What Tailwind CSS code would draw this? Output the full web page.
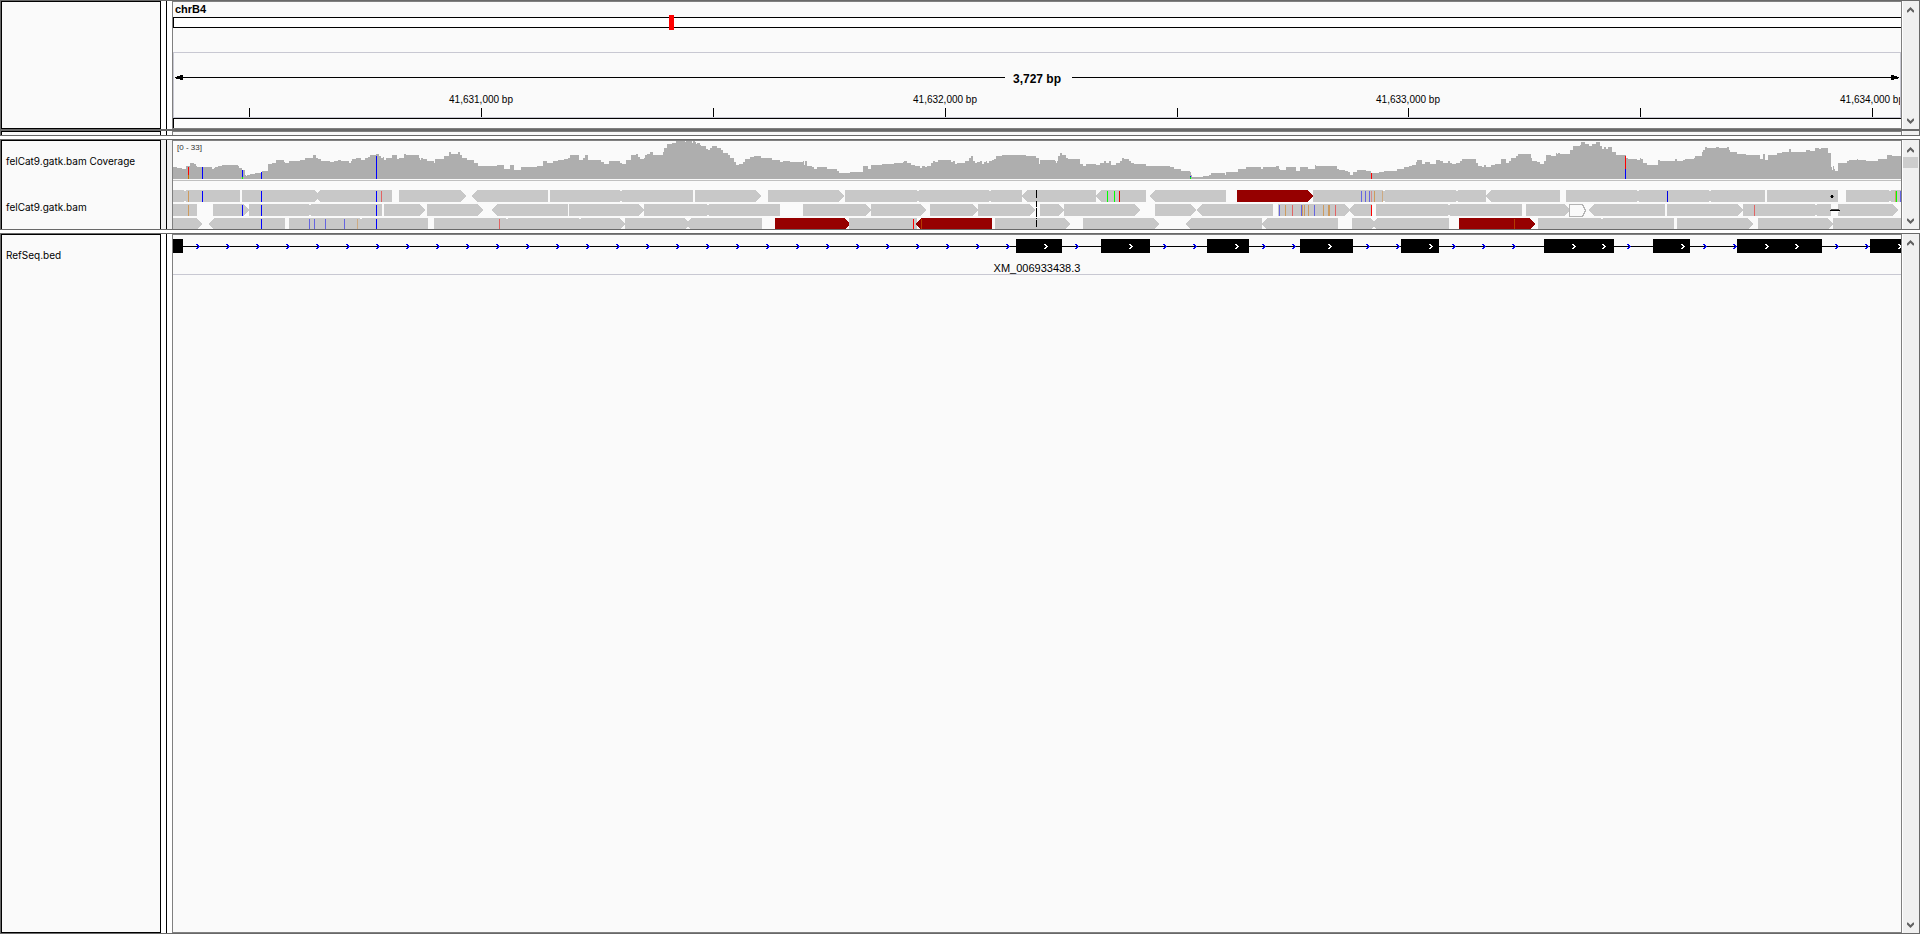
<!DOCTYPE html>
<html lang="en">
<head>
<meta charset="utf-8">
<title>Genome browser - chrB4</title>
<script src="https://cdn.jsdelivr.net/npm/@tailwindcss/browser@4"></script>
</head>
<body class="bg-white text-black font-['Liberation_Sans',Arial,sans-serif]">
<svg class="hidden" aria-hidden="true">
  <symbol id="up" viewBox="0 0 7 6"><path d="M0 5L3.5 1.500L7 5" fill="none" stroke="#606060" stroke-width="2"/></symbol>
  <symbol id="down" viewBox="0 0 7 6"><path d="M0 1L3.5 4.500L7 1" fill="none" stroke="#606060" stroke-width="2"/></symbol>
</svg>
<main class="flex flex-col min-h-screen">

  <!-- Header: ideogram and ruler -->
  <section class="flex border-t border-x border-[#696969]">
    <div class="w-40 shrink-0 border border-black bg-[#fafafa]"></div>
    <div class="w-[11px] shrink-0 flex justify-center bg-white"><div class="w-px bg-black"></div></div>
    <div class="flex-1 min-w-0 border border-[#808080] bg-[#fafafa]">
      <h1 class="h-[15px] pl-0.5 text-[11px] leading-[14px] font-bold">chrB4</h1>
      <div class="relative h-[11px] border-y border-l border-black bg-white">
        <div class="absolute left-[28.65%] -top-[3px] w-[5px] h-[15px] bg-[#ff0000]"></div>
      </div>
      <div class="mt-6 border border-[#c8c8d2]">
        <svg id="ruler" class="block w-full h-16" role="img" aria-label="Ruler, 3,727 bp" shape-rendering="crispEdges"></svg>
      </div>
      <div class="h-[10px] border-t border-l border-black bg-[#fcfcfc]"></div>
    </div>
    <div class="w-[17px] shrink-0 border-l border-white bg-[#f0f0f0] flex flex-col justify-between">
      <button type="button" aria-label="Scroll header up" class="h-[18px] pr-0.5 flex items-center justify-center"><svg class="w-[7px] h-1.5"><use href="#up"/></svg></button>
      <button type="button" aria-label="Scroll header down" class="h-4 pr-0.5 flex items-center justify-center"><svg class="w-[7px] h-1.5"><use href="#down"/></svg></button>
    </div>
  </section>

  <!-- Collapsed data panel -->
  <section class="flex h-[7px] mb-[3px] border-t-2 border-x border-b border-[#696969]">
    <div class="w-40 shrink-0 border-t border-x border-black bg-[#fafafa]"></div>
    <div class="w-[11px] shrink-0 flex justify-center bg-white"><div class="w-px bg-black"></div></div>
    <div class="flex-1 border-t border-x border-[#808080] bg-[#fafafa]"></div>
    <div class="w-[17px] shrink-0 border-l border-white bg-[#f0f0f0]"></div>
  </section>

  <!-- Coverage and alignments -->
  <section class="flex mb-[3px] border border-[#696969]">
    <div class="w-40 shrink-0 border-t border-x border-black bg-[#fafafa] pt-3 pl-1 flex flex-col gap-[30px] text-[10px] leading-[16px] font-['Inter','Liberation_Sans',sans-serif]">
      <div>felCat9.gatk.bam Coverage</div>
      <div>felCat9.gatk.bam</div>
    </div>
    <div class="w-[11px] shrink-0 flex justify-center bg-[#f0f0f0]"><div class="w-px bg-black"></div></div>
    <div class="relative flex-1 min-w-0 border-t border-x border-[#808080] bg-[#fafafa]">
      <svg id="reads" class="block w-full h-[88px]" viewBox="173 141 1728 88" preserveAspectRatio="none" role="img" aria-label="Coverage and aligned reads" shape-rendering="crispEdges"></svg>
      <div class="absolute left-1 top-0.5 text-[8px] leading-[10px] text-[#303030]">[0 - 33]</div>
    </div>
    <div class="w-[17px] shrink-0 border-l border-white bg-[#f0f0f0] flex flex-col">
      <button type="button" aria-label="Scroll alignments up" class="h-[17px] pr-0.5 flex items-end justify-center pb-1"><svg class="w-[7px] h-1.5"><use href="#up"/></svg></button>
      <div class="h-[11px] mr-px bg-[#cdcdcd]"></div>
      <button type="button" aria-label="Scroll alignments down" class="mt-auto h-4 pr-0.5 flex items-center justify-center"><svg class="w-[7px] h-1.5"><use href="#down"/></svg></button>
    </div>
  </section>

  <!-- Gene annotations -->
  <section class="flex flex-1 border border-[#696969]">
    <div class="w-40 shrink-0 border border-black bg-[#fafafa] pt-3 pl-1 text-[10px] leading-[16px] font-['Inter','Liberation_Sans',sans-serif]">RefSeq.bed</div>
    <div class="w-[11px] shrink-0 flex justify-center bg-white"><div class="w-px bg-black"></div></div>
    <div class="flex-1 min-w-0 border border-[#808080] bg-[#fafafa]">
      <svg id="genes" class="block w-full h-5" viewBox="173 235 1728 20" preserveAspectRatio="none" role="img" aria-label="Gene XM_006933438.3" shape-rendering="crispEdges"></svg>
      <div class="h-5 border-b border-[#c8c8d2] text-center text-[11px] leading-[26px]">XM_006933438.3</div>
    </div>
    <div class="w-[17px] shrink-0 border-l border-white bg-[#f0f0f0] flex flex-col justify-between">
      <button type="button" aria-label="Scroll annotations up" class="h-4 pr-0.5 flex items-end justify-center pb-1"><svg class="w-[7px] h-1.5"><use href="#up"/></svg></button>
      <button type="button" aria-label="Scroll annotations down" class="h-4 pr-0.5 flex items-center justify-center"><svg class="w-[7px] h-1.5"><use href="#down"/></svg></button>
    </div>
  </section>
</main>

<script>
const rect = (x, y, w, h, fill) => `<rect x="${x}" y="${y}" width="${w}" height="${h}" fill="${fill}"/>`;

// Ruler: positions are shares of the visible range
{
  const p = x => ((x - 174) / 17.26).toFixed(3) + '%';
  let s = rect('3', 24, '48%', 1, '#000') + rect('52%', 24, '47.9%', 1, '#000');
  s += '<path d="M1 24h2v-1h3v-1h3v5h-3v-1h-4v-1h-1z"/>';
  s += '<svg x="100%" overflow="visible"><path d="M-1 24h-2v-1h-3v-1h-3v5h3v-1h4v-1h1z"/></svg>';
  s += `<text x="50%" y="30" text-anchor="middle" font-size="12" font-weight="bold">3,727 bp</text>`;
  [249, 481, 713, 945, 1177, 1408, 1640, 1872].forEach(x => s += rect(p(x), 55, 1, 9, '#000'));
  [[481, '41,631,000 bp'], [945, '41,632,000 bp'], [1408, '41,633,000 bp'], [1872, '41,634,000 bp']]
    .forEach(([x, t]) => s += `<text x="${p(x)}" y="50" text-anchor="middle" font-size="10">${t}</text>`);
  document.getElementById('ruler').innerHTML = s;
}

// Coverage: start and depth of every step
const cov = `173 12 177 11 182 10 186 13 190 16 194 15 196 13 197 12 212 10 214 11 215 12 218 13 222 14 238 13 239 11 242 9 245 4 246 3 247 4 250 5 255 6 262 8
268 15 272 16 276 19 284 17 285 16 289 18 300 19 305 21 313 24 316 21 318 20 321 18 330 17 334 18 338 19 341 18 349 16 351 18 352 20 356 21 361 19 365 21 368 22 370 24 376 25 379 23 381 21 383 22 384 19 386 21 392 24 397 20 399 21 404 25 406 24
419 21 420 19 421 21 423 20 427 18 434 16 435 20 444 23 449 27 451 25 458 27 460 24 462 21 467 19 474 16 478 13 497 14 504 10 510 14 514 9 521 12 537 13 543 18 547 16 553 18 558 19 564 20 568 21 570 24 579 19 583 21 585 24 588 19 601 17 604 15 609 18 620 16 622 15 626 19 631 24 636 25 638 22 640 20 644 21 645 24 647 25 650 27 653 24 663 27 664 31 667 35 672 36 676 38 685 37 686 38 692 36 693 38 695 37 696 35 697 36 700 34 701 33 706 30 708 29 710 31 712 33 717 31 721 29 723 26
728 24 730 21 734 17 736 14 739 15 743 17 745 20 750 22 754 23 761 21 772 19 780 17 783 18 790 17 803 18 804 14 805 18 807 13 812 12 814 10 817 12 827 10 837 8 839 6 850 7 863 13 868 10 871 14 882 15 894 16 903 17 904 18 907 16 911 14 915 13 920 11 922 13 925 12 927 13 931 16 933 18 935 17 938 19 951 17 953 18 955 15 957 16 965 18 969 21 971 23 973 18 975 16 977 17 980 18 982 15 984 17 986 18 987 16 989 18 992 19 994 20 996 23 1002 24 1026 23 1036 21 1039 15 1040 19
1055 18 1056 16 1057 18 1058 23 1060 26 1062 24 1066 21 1068 20 1080 15 1083 13 1086 15 1096 14 1100 16 1104 18 1106 16 1109 18 1111 14 1116 16 1120 18 1122 21 1124 20 1129 18 1131 16 1134 15 1146 13 1170 12 1174 10 1181 8 1190 7 1191 4 1192 2 1203 3 1209 4 1211 6 1225 4 1226 7 1238 10 1246 12 1261 10 1263 12 1276 13 1279 10 1280 9 1286 12 1296 8 1300 12 1308 10 1315 14 1316 13 1337 10 1339 9 1345 8 1348 7 1350 4 1353 7 1357 9
1366 8 1371 6 1379 7 1384 8 1397 10 1404 12 1409 13 1412 14 1416 17 1417 19 1422 15 1425 17 1430 15 1436 19 1440 18 1443 16 1448 18 1450 16 1452 15 1456 16 1460 18 1462 20 1476 16 1478 13 1482 12 1484 14 1486 12 1491 14 1495 15 1501 20 1506 16 1509 18 1511 21 1516 23 1518 25 1531 21 1532 18 1537 17 1540 15 1544 18 1546 24 1551 23 1556 26 1557 25 1558 26 1560 25 1570 29 1573 33 1580 34 1581 37 1585 35 1589 33 1592 35 1596 37 1600 33 1602 30 1604 32 1606 30 1608 32 1612 27 1616 24 1626 21 1628 20 1637 19
1640 21 1641 20 1643 16 1647 14 1658 19 1660 18 1675 20 1677 18 1683 19 1685 20 1694 21 1695 23 1702 27 1703 29 1705 32 1707 31 1716 32 1719 31 1727 32 1729 29 1730 27 1737 25 1746 24 1760 20 1763 25 1765 19 1768 24 1777 26 1782 27 1789 30 1791 27 1806 29 1810 28 1815 31 1819 30 1821 31 1828 26 1831 12 1832 9 1833 13 1834 10 1835 8 1838 16 1847 18 1849 19 1857 20 1858 19 1866 18 1878 20 1887 24 1892 23 1901 0`
  .trim().split(/\s+/).map(Number);
let area = 'M173 179';
for (let i = 0; i + 2 < cov.length; i += 2) area += `V${179 - cov[i + 1]}H${cov[i + 2]}`;
let out = `<path d="${area}V179z" fill="#aeaeae"/>` + rect(173, 180, 1728, 1, '#c0c0c0');

const G = '#c8c8c8', D = '#960000', BL = '#0000ff', PB = '#6464e1', TN = '#cd9b5f', LR = '#e16464', RD = '#ff0000', GR = '#00ff00', BR = '#b43c00';
[[188,167,8,RD],[188,175,4,'#c87800'],[202,167,12,BL],[242,170,7,BL],[242,177,2,GR],[261,172,7,BL],[376,156,23,BL],[1190,176,1,BL],[1190,177,2,GR],[1371,173,6,RD],[1625,156,13,RD],[1625,169,10,BL]]
  .forEach(([x, y, h, c]) => out += rect(x, y, 1, h, c));

// Aligned reads: start, end, pointed end (L or R), colour
const rows = [
  [[173,240],[242,320,'R'],[315,392,'L'],[399,466,'R'],[472,548,'L'],[550,693],[695,761,'R'],[768,844,'R'],[845,1022],[1022,1096,'L'],[1096,1146,'L'],[1150,1226,'L'],[1237,1313,'R',D],[1313,1486],[1486,1560,'L'],[1566,1765],[1767,1838],[1846,1901]],
  [[173,197],[213,249,'R'],[249,382],[384,425,'R'],[427,483,'R'],[492,568,'L'],[569,644,'R'],[644,780],[803,871,'R'],[871,926,'R'],[930,978,'R'],[978,1035,'R'],[1040,1064,'R'],[1064,1140,'R'],[1155,1196,'R'],[1197,1273,'L'],[1278,1350,'R'],[1349,1372,'L'],[1376,1522],[1526,1570,'R'],[1589,1665,'L'],[1667,1743,'R'],[1743,1831],[1838,1898,'R']],
  [[173,202,'R'],[209,285,'L'],[289,428],[434,507],[507,580],[580,625,'R'],[625,690,'R'],[686,762,'L'],[775,850,'R',D],[849,917],[916,992,'L',D],[995,1070,'R'],[1083,1159,'R'],[1186,1262,'L'],[1262,1338,'L'],[1352,1376,'R'],[1372,1449,'L'],[1459,1535,'R',D],[1538,1674],[1677,1753,'R'],[1758,1833,'R'],[1833,1901]]
];
rows.forEach((row, r) => {
  const y = 190 + r * 14;
  row.forEach(([a, b, dir, c]) => {
    const l = dir === 'L' ? 5 : 0, t = dir === 'R' ? 5 : 0;
    out += `<path d="M${a + l} ${y}H${b - t}L${b} ${y + 6}L${b - t} ${y + 12}H${a + l}L${a} ${y + 6}z" fill="${c || G}"/>`;
  });
});
[[185,0],[621,0],[918,0],[990,0],[1384,0],[1457,0],[1638,0],[1710,0],[1890,0],[310,1],[708,1],[1449,1],[1816,1],[361,2],[507,2],[580,2],[1602,2]].forEach(([x, r]) => {
  const y = 190 + r * 14;
  out += `<path d="M${x - 1} ${y}h2l-1 2zM${x - 1} ${y + 12}h2l-1 -2z" fill="#fafafa"/>`;
});
out += '<path d="M1569.5 204.500h13l3 6l-3 6h-13z" fill="#fafafa" stroke="#b4b4b4"/>';

// Mismatched bases: x, row, colour
[[188,0,TN],[202,0,BL],[261,0,BL],[376,0,BL],[381,0,LR],[1107,0,GR],[1114,0,GR],[1119,0,'#e60000'],[1361,0,PB],[1365,0,PB],[1369,0,PB],[1371,0,'#d78c8c'],[1374,0,TN],[1382,0,'#cdaa82'],[1667,0,'#0000e6'],[1895,0,TN],[1896,0,GR],[1900,0,PB],
 [188,1,TN],[242,1,BL],[261,1,BL],[376,1,BL],[1279,1,PB],[1285,1,TN],[1292,1,LR],[1301,1,PB],[1302,1,TN],[1304,1,TN],[1308,1,TN],[1314,1,PB],[1323,1,TN],[1328,1,TN],[1329,1,TN],[1335,1,LR],[1371,1,RD],[1754,1,LR],
 [261,2,BL],[309,2,PB],[314,2,PB],[325,2,PB],[344,2,PB],[357,2,'#cdaa82'],[376,2,BL],[499,2,LR],[913,2,RD],[921,2,BR],[1514,2,BR]]
  .forEach(([x, r, c]) => out += rect(x, 191 + r * 14, 1, 11, c));
// Deletions and insertions
[[190,8],[201,6],[208,9],[218,1],[220,7]].forEach(([y, h]) => out += rect(1036, y, 1, h, '#000'));
out += rect(1830, 196, 4, 1, '#505050') + rect(1831, 195, 2, 3, '#000') + rect(1831, 209, 8, 3, '#fafafa') + rect(1830, 210, 10, 1, '#000') + rect(1831, 209, 8, 1, '#505050');
document.getElementById('reads').innerHTML = out;

// Gene model
{
  const chev = (x, c) => `<path transform="translate(${x} 244)" d="M0 0h2v1h1v1h1v1h-1v1h-1v1h-2v-1h1v-1h1v-1h-1v-1h-1z" fill="${c}"/>`;
  let g = rect(173, 246, 1728, 1, '#000');
  for (let x = 196; x < 1010; x += 30) g += chev(x, '#0000f0');
  [1075,1163,1193,1262,1292,1366,1396,1452,1482,1512,1627,1703,1733,1835,1865].forEach(x => g += chev(x, '#0000f0'));
  [[173,183],[1016,1062],[1101,1150],[1207,1249],[1300,1353],[1401,1439],[1544,1614],[1653,1690],[1737,1822],[1870,1901]].forEach(([a, b]) => g += rect(a, 239, b - a, 14, '#000'));
  [1044,1129,1235,1328,1429,1572,1602,1681,1765,1795,1898].forEach(x => g += chev(x, '#fff'));
  document.getElementById('genes').innerHTML = g;
}
</script>
</body>
</html>
